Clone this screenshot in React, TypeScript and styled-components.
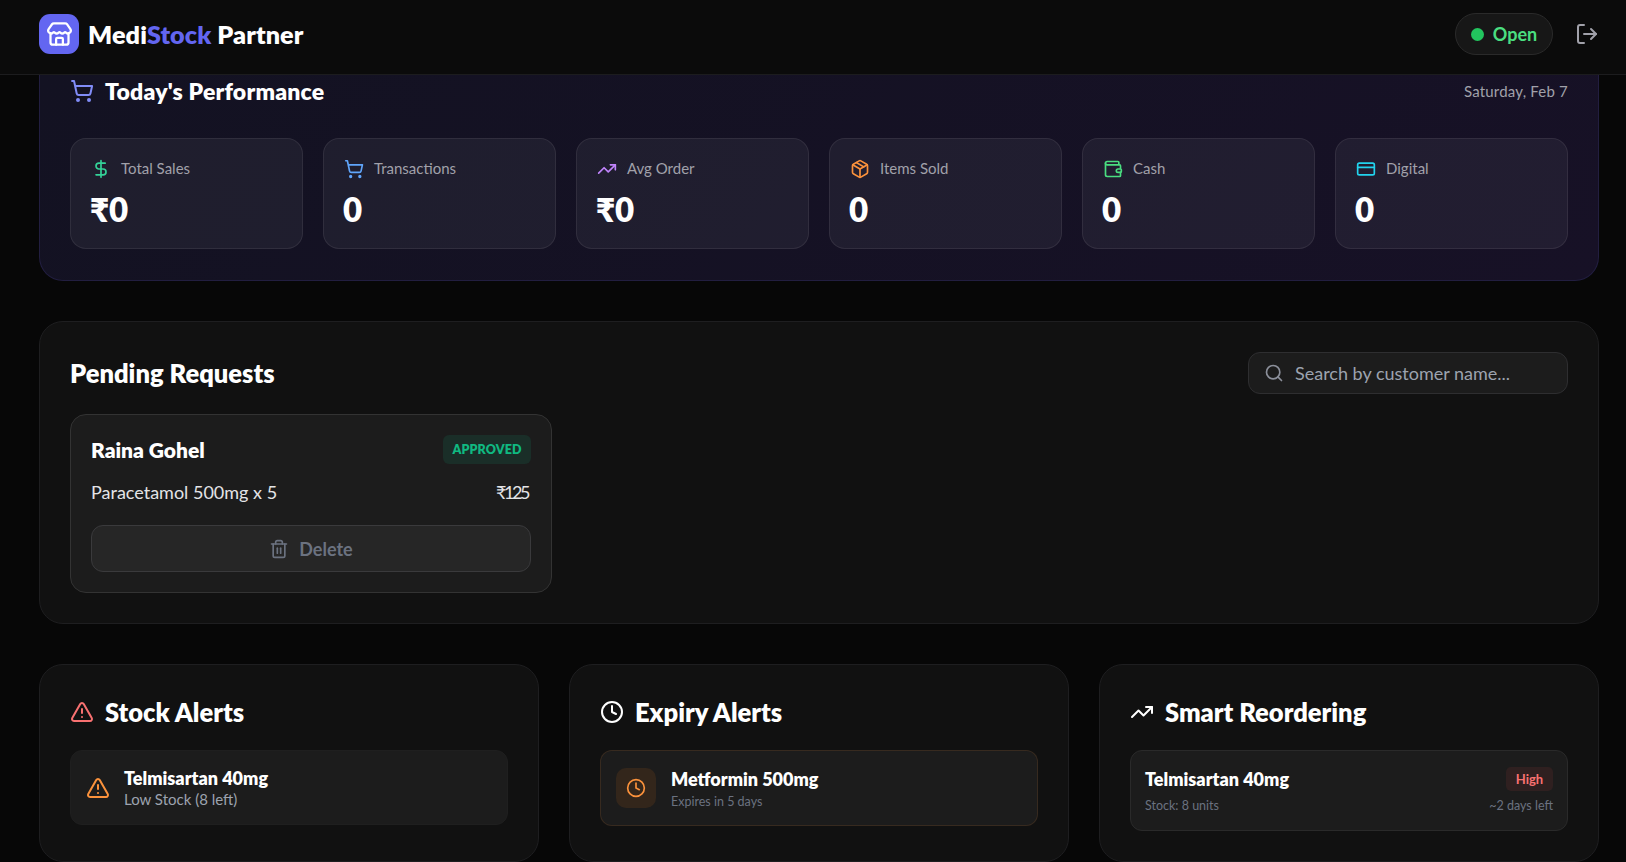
import {
  Clock,
  CreditCard,
  DollarSign,
  LogOut,
  Package,
  Search,
  ShoppingCart,
  Store,
  Trash2,
  TrendingUp,
  TriangleAlert,
  Wallet,
} from "lucide-react";
import styled, { createGlobalStyle } from "styled-components";

const GlobalStyle = createGlobalStyle`
  html, body {
    margin: 0;
    height: 100%;
    background-color: #070707;
    color: #fff;
    font-family: "Lato", "Noto Sans", sans-serif;
    overflow: hidden;
  }
  * {
    box-sizing: border-box;
  }
`;

const Page = styled.div`
  height: 100vh;
  display: flex;
  flex-direction: column;
  overflow: hidden;
`;

const Header = styled.header`
  flex: none;
  height: 75px;
  padding: 0 27px 6px 39px;
  display: flex;
  align-items: center;
  justify-content: space-between;
  background-color: #0b0b0b;
  border-bottom: 1px solid #1c1c1e;
`;

const Brand = styled.div`
  display: flex;
  align-items: center;
  gap: 9px;
`;

const LogoBox = styled.div`
  width: 40px;
  height: 40px;
  border-radius: 11px;
  background-color: #6366f1;
  display: flex;
  justify-content: center;
  align-items: center;
  color: #fff;
`;

const BrandName = styled.div`
  font-size: 25.2px;
  font-weight: 800;
  letter-spacing: 0.1px;
  span {
    color: #6366f1;
  }
`;

const HeaderRight = styled.div`
  display: flex;
  align-items: center;
  gap: 22px;
  color: #a1a1aa;
`;

const StatusPill = styled.div`
  height: 42px;
  width: 98px;
  border-radius: 21px;
  border: 1px solid #2a2a2a;
  background-color: #171717;
  display: flex;
  align-items: center;
  justify-content: center;
  gap: 9px;
  color: #4ade80;
  font-size: 18px;
  font-weight: 700;
`;

const Dot = styled.span`
  width: 13px;
  height: 13px;
  border-radius: 50%;
  background-color: #22c55e;
`;

const Main = styled.main`
  flex: 1;
  min-height: 0;
  padding: 0 27px 0 39px;
  display: flex;
  flex-direction: column;
  gap: 40px;
`;

const PerfCard = styled.section`
  flex: none;
  padding: 0 30px 31px;
  border: 1px solid #221e40;
  border-top: none;
  border-radius: 0 0 24px 24px;
  background: linear-gradient(135deg, #131222 0%, #171126 100%);
`;

const PerfHead = styled.div`
  height: 32px;
  margin-bottom: 31px;
  display: flex;
  align-items: center;
  justify-content: space-between;
`;

const TitleGroup = styled.div`
  display: flex;
  align-items: center;
  gap: 11px;
`;

const PerfTitle = styled.h2`
  margin: 0;
  font-size: 23px;
  font-weight: 800;
  letter-spacing: 0.2px;
`;

const DateText = styled.span`
  font-size: 15px;
  letter-spacing: 0.2px;
  color: #a1a1aa;
`;

const StatGrid = styled.div`
  display: grid;
  grid-template-columns: repeat(6, 1fr);
  gap: 20px;
`;

const StatCard = styled.div`
  height: 111px;
  padding: 20px;
  border: 1px solid rgba(255, 255, 255, 0.08);
  border-radius: 16px;
  background-color: rgba(255, 255, 255, 0.05);
`;

const StatLabel = styled.div`
  height: 20px;
  display: flex;
  align-items: center;
  gap: 10px;
  font-size: 15px;
  color: #a1a1aa;
  span {
    margin-top: -2px;
  }
`;

const StatValue = styled.div`
  margin: 10px 0 0 -1px;
  font-size: 33px;
  line-height: 40px;
  font-weight: 800;
`;

const Panel = styled.section`
  flex: none;
  padding: 30px;
  border: 1px solid #1e1e20;
  border-radius: 24px;
  background-color: #111;
`;

const PanelHead = styled.div`
  height: 42px;
  margin-bottom: 20px;
  display: flex;
  align-items: center;
  justify-content: space-between;
`;

const PanelTitle = styled.h2`
  margin: 0;
  font-size: 25.5px;
  font-weight: 800;
`;

const SearchBox = styled.label`
  width: 320px;
  height: 42px;
  padding: 0 15px;
  display: flex;
  align-items: center;
  gap: 11px;
  border: 1px solid #2e2e30;
  border-radius: 12px;
  background-color: #1c1c1c;
  color: #8b8f9a;
`;

const SearchInput = styled.input`
  flex: 1;
  min-width: 0;
  border: none;
  outline: none;
  padding: 0;
  background: none;
  color: #fff;
  font-family: inherit;
  font-size: 18px;
  &::placeholder {
    color: #9ca3af;
    opacity: 1;
  }
`;

const RequestGrid = styled.div`
  display: grid;
  grid-template-columns: repeat(3, 1fr);
  gap: 26px;
`;

const RequestCard = styled.div`
  height: 179px;
  padding: 20px;
  border: 1px solid #333;
  border-radius: 16px;
  background-color: #1c1c1c;
`;

const SpacedRow = styled.div`
  display: flex;
  align-items: center;
  justify-content: space-between;
`;

const CustomerName = styled.div`
  font-size: 21px;
  font-weight: 800;
`;

const ApprovedBadge = styled.span`
  height: 29px;
  width: 88px;
  border-radius: 6px;
  background-color: #1a2e28;
  color: #10b981;
  font-size: 12.5px;
  font-weight: 800;
  letter-spacing: 0.1px;
  display: flex;
  justify-content: center;
  align-items: center;
`;

const ItemRow = styled(SpacedRow)`
  margin-top: 16px;
  height: 24px;
  font-size: 18px;
  color: #e4e4e7;
`;

const Price = styled.span`
  letter-spacing: -2.4px;
  padding-right: 3px;
`;

const DeleteButton = styled.button`
  width: 100%;
  height: 47px;
  margin-top: 21px;
  border: 1px solid #3a3a3c;
  border-radius: 12px;
  background-color: #262626;
  color: #6b7280;
  font-family: inherit;
  font-size: 18px;
  font-weight: 700;
  display: flex;
  justify-content: center;
  align-items: center;
  gap: 10px;
`;

const AlertGrid = styled.div`
  display: grid;
  grid-template-columns: repeat(3, 1fr);
  gap: 30px;
`;

const AlertHead = styled.div`
  height: 34px;
  margin-bottom: 21px;
  display: flex;
  align-items: center;
  gap: 11px;
`;

const AlertRow = styled.div`
  padding: 14px 15px;
  height: 75px;
  display: flex;
  align-items: center;
  gap: 14px;
  border-radius: 12px;
  border: 1px solid #1f1f1f;
  background-color: #1c1c1c;
`;

const ExpiryRow = styled(AlertRow)`
  height: 76px;
  gap: 15px;
  border-color: rgba(251, 146, 60, 0.12);
`;

const ExpiryText = styled.div`
  padding-top: 2px;
`;

const ExpiryIcon = styled.div`
  width: 40px;
  height: 40px;
  border-radius: 10px;
  background-color: #33261b;
  color: #fb923c;
  display: flex;
  justify-content: center;
  align-items: center;
`;

const AlertName = styled.div`
  font-size: 18px;
  font-weight: 800;
  line-height: 24px;
`;

const StockSub = styled.div`
  font-size: 15px;
  line-height: 19px;
  color: #9ca3af;
`;

const ExpirySub = styled.div`
  margin-top: 2px;
  font-size: 12.5px;
  line-height: 18px;
  color: #6b7280;
`;

const ReorderRow = styled.div`
  height: 81px;
  padding: 16px 14px 14px;
  border: 1px solid #2a2a2a;
  border-radius: 12px;
  background-color: #1c1c1c;
`;

const HighBadge = styled.span`
  width: 47px;
  height: 24px;
  border-radius: 5px;
  background-color: #2f2020;
  color: #f87171;
  font-size: 13px;
  font-weight: 700;
  display: flex;
  justify-content: center;
  align-items: center;
`;

const ReorderMeta = styled(SpacedRow)`
  margin-top: 6px;
  font-size: 12.5px;
  line-height: 18px;
  color: #6b7280;
`;

const stats = [
  { label: "Total Sales", value: "₹0", Icon: DollarSign, color: "#34d399" },
  { label: "Transactions", value: "0", Icon: ShoppingCart, color: "#60a5fa" },
  { label: "Avg Order", value: "₹0", Icon: TrendingUp, color: "#c084fc" },
  { label: "Items Sold", value: "0", Icon: Package, color: "#fb923c" },
  { label: "Cash", value: "0", Icon: Wallet, color: "#4ade80" },
  { label: "Digital", value: "0", Icon: CreditCard, color: "#22d3ee" },
];

function App() {
  return (
    <Page>
      <GlobalStyle />
      <Header>
        <Brand>
          <LogoBox>
            <Store size={27} />
          </LogoBox>
          <BrandName>
            Medi<span>Stock</span> Partner
          </BrandName>
        </Brand>
        <HeaderRight>
          <StatusPill>
            <Dot />
            Open
          </StatusPill>
          <LogOut size={24} />
        </HeaderRight>
      </Header>
      <Main>
        <PerfCard>
          <PerfHead>
            <TitleGroup>
              <ShoppingCart size={24} color="#818cf8" />
              <PerfTitle>Today's Performance</PerfTitle>
            </TitleGroup>
            <DateText>Saturday, Feb 7</DateText>
          </PerfHead>
          <StatGrid>
            {stats.map(({ label, value, Icon, color }) => (
              <StatCard key={label}>
                <StatLabel>
                  <Icon size={20} color={color} />
                  <span>{label}</span>
                </StatLabel>
                <StatValue>{value}</StatValue>
              </StatCard>
            ))}
          </StatGrid>
        </PerfCard>

        <Panel>
          <PanelHead>
            <PanelTitle>Pending Requests</PanelTitle>
            <SearchBox>
              <Search size={20} />
              <SearchInput placeholder="Search by customer name..." />
            </SearchBox>
          </PanelHead>
          <RequestGrid>
            <RequestCard>
              <SpacedRow>
                <CustomerName>Raina Gohel</CustomerName>
                <ApprovedBadge>APPROVED</ApprovedBadge>
              </SpacedRow>
              <ItemRow>
                <span>Paracetamol 500mg x 5</span>
                <Price>₹125</Price>
              </ItemRow>
              <DeleteButton>
                <Trash2 size={20} />
                Delete
              </DeleteButton>
            </RequestCard>
          </RequestGrid>
        </Panel>

        <AlertGrid>
          <Panel>
            <AlertHead>
              <TriangleAlert size={24} color="#f87171" />
              <PanelTitle>Stock Alerts</PanelTitle>
            </AlertHead>
            <AlertRow>
              <TriangleAlert size={24} color="#fb923c" />
              <div>
                <AlertName>Telmisartan 40mg</AlertName>
                <StockSub>Low Stock (8 left)</StockSub>
              </div>
            </AlertRow>
          </Panel>
          <Panel>
            <AlertHead>
              <Clock size={24} color="#fff" />
              <PanelTitle>Expiry Alerts</PanelTitle>
            </AlertHead>
            <ExpiryRow>
              <ExpiryIcon>
                <Clock size={20} />
              </ExpiryIcon>
              <ExpiryText>
                <AlertName>Metformin 500mg</AlertName>
                <ExpirySub>Expires in 5 days</ExpirySub>
              </ExpiryText>
            </ExpiryRow>
          </Panel>
          <Panel>
            <AlertHead>
              <TrendingUp size={24} color="#fff" />
              <PanelTitle>Smart Reordering</PanelTitle>
            </AlertHead>
            <ReorderRow>
              <SpacedRow>
                <AlertName>Telmisartan 40mg</AlertName>
                <HighBadge>High</HighBadge>
              </SpacedRow>
              <ReorderMeta>
                <span>Stock: 8 units</span>
                <span>~2 days left</span>
              </ReorderMeta>
            </ReorderRow>
          </Panel>
        </AlertGrid>
      </Main>
    </Page>
  );
}

export default App;
